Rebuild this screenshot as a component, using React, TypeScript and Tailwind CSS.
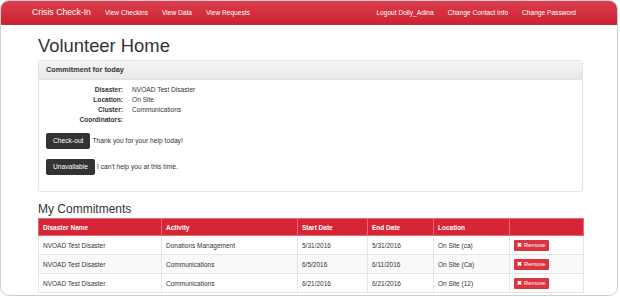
import React from "react";

const rows = [
  { name: "NVOAD Test Disaster", activity: "Donations Management", start: "5/31/2016", end: "5/31/2016", loc: "On Site (ca)" },
  { name: "NVOAD Test Disaster", activity: "Communications", start: "6/5/2016", end: "6/11/2016", loc: "On Site (Ca)" },
  { name: "NVOAD Test Disaster", activity: "Communications", start: "6/21/2016", end: "6/21/2016", loc: "On Site (12)" },
];

const details = [
  ["Disaster:", "NVOAD Test Disaster"],
  ["Location:", "On Site"],
  ["Cluster:", "Communications"],
  ["Coordinators:", ""],
];

export default function App() {
  return (
    <div className="w-[620px] h-[297px] bg-white font-['Liberation_Sans',Arial,sans-serif] text-[#333]">
      <div className="w-[618px] h-[296px] border border-[#cfcfcf] rounded-[9px] overflow-hidden">
        {/* navbar */}
        <div className="h-[24px] bg-gradient-to-b from-[#dc3d4d] to-[#cc2131] border-b border-[#a83a42] flex items-center text-white">
          <div className="pl-[31px] text-[8.7px]">Crisis Check-In</div>
          <div className="flex gap-[14px] ml-[14px] text-[6.6px]">
            <span>View Checkins</span>
            <span>View Data</span>
            <span>View Requests</span>
          </div>
          <div className="flex gap-[14px] ml-auto mr-[41px] text-[6.6px]">
            <span>Logout Dolly_Adina</span>
            <span>Change Contact Info</span>
            <span>Change Password</span>
          </div>
        </div>

        <div className="mx-[37px] w-[545px]">
          <h1 className="text-[18.4px] leading-none mt-[12px] mb-[5px]">Volunteer Home</h1>

          <div className="border border-[#e3e3e3] rounded-[3px] h-[132px]">
            <div className="h-[19px] bg-gradient-to-b from-[#f5f5f5] to-[#e8e8e8] border-b border-[#e0e0e0] flex items-center pl-[7px] text-[7.3px] font-bold">
              Commitment for today
            </div>
            <div className="px-[7px] pt-[5px]">
              <div className="flex flex-col text-[6.6px] leading-[10px]">
                {details.map(([k, v]) => (
                  <div key={k} className="flex">
                    <span className="w-[77px] text-right font-bold">{k}</span>
                    <span className="ml-[9px]">{v}</span>
                  </div>
                ))}
              </div>
              <div className="flex items-center mt-[8px] text-[6.7px]">
                <button className="h-[16px] px-[7px] bg-[#333] rounded-[2px] text-white">Check-out</button>
                <span className="ml-[2px]">Thank you for your help today!</span>
              </div>
              <div className="flex items-center mt-[10px] text-[6.7px]">
                <button className="h-[16px] px-[7px] bg-[#333] rounded-[2px] text-white">Unavailable</button>
                <span className="ml-[2px]">I can't help you at this time.</span>
              </div>
            </div>
          </div>

          <h3 className="text-[12px] leading-none mt-[11px] mb-[3px]">My Commitments</h3>

          <table className="w-[545px] border-collapse table-fixed text-[6.5px]">
            <colgroup>
              <col className="w-[123px]" />
              <col className="w-[136px]" />
              <col className="w-[70px]" />
              <col className="w-[66px]" />
              <col className="w-[76px]" />
              <col className="w-[74px]" />
            </colgroup>
            <thead>
              <tr className="h-[17px] bg-[#d52536] text-white">
                {["Disaster Name", "Activity", "Start Date", "End Date", "Location", ""].map((h, i) => (
                  <th key={i} className="text-left font-bold px-[4px] border border-[#e46a74]">{h}</th>
                ))}
              </tr>
            </thead>
            <tbody>
              {rows.map((r, i) => (
                <tr key={i} className={`h-[19px] ${i % 2 === 1 ? "bg-[#f9f9f9]" : "bg-white"}`}>
                  <td className="px-[4px] border border-[#e5e5e5]">{r.name}</td>
                  <td className="px-[4px] border border-[#e5e5e5]">{r.activity}</td>
                  <td className="px-[4px] border border-[#e5e5e5]">{r.start}</td>
                  <td className="px-[4px] border border-[#e5e5e5]">{r.end}</td>
                  <td className="px-[4px] border border-[#e5e5e5]">{r.loc}</td>
                  <td className="px-[4px] border border-[#e5e5e5]">
                    <span className="inline-flex items-center h-[11px] px-[3px] bg-[#d9353f] rounded-[1px] text-white text-[5.8px]">
                      <span className="font-bold mr-[2px]">✖</span>Remove
                    </span>
                  </td>
                </tr>
              ))}
            </tbody>
          </table>
        </div>
      </div>
    </div>
  );
}
